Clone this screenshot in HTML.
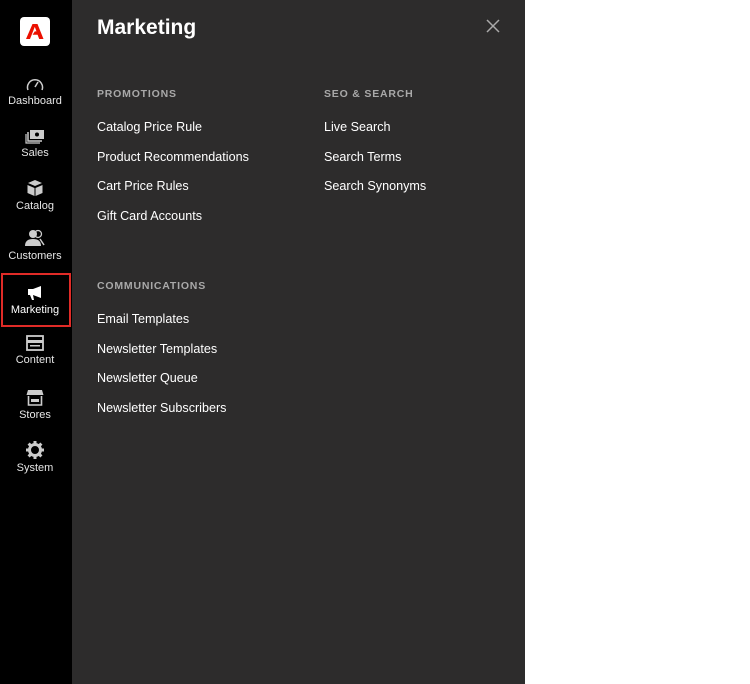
<!DOCTYPE html>
<html><head><style>
*{margin:0;padding:0;box-sizing:border-box}
body{width:750px;height:684px;background:#fff;font-family:"Liberation Sans",sans-serif;position:relative;overflow:hidden}
#side{position:absolute;left:0;top:0;width:72px;height:684px;background:#000}
#panel{position:absolute;left:72px;top:0;width:453px;height:684px;background:#2d2c2c}
.logo{position:absolute;left:20px;top:17px;width:30px;height:29px;background:#fff;border-radius:4px}
.it{position:absolute;left:0;width:70px;text-align:center;color:#e6e6e6;font-size:11px}
.it svg{display:block;margin:0 auto 3px}
.sel{position:absolute;left:1px;top:273px;width:70px;height:54px;border:2px solid #e02b27}
.t{position:absolute;color:#fff;font-size:12.6px;}
.h{position:absolute;color:#a9a9a9;font-size:10.5px;font-weight:bold;letter-spacing:0.8px}
h1{position:absolute;left:25px;top:16px;color:#fff;font-size:21px;font-weight:bold}
</style></head><body>
<div id="side">
<div class="logo"><svg width="30" height="29" viewBox="0 0 30 29"><path d="M12.5 7h5l6 15h-4.3l-1.6-4.2h-5l2.2-3.4h1.7l-1.7-4.5L10 22H6z" fill="#eb1000"/></svg></div>
<div class="it" style="top:76px"><svg width="18" height="16" viewBox="0 0 18 16"><path d="M2 14A7.5 7.5 0 1 1 16 14" fill="none" stroke="#ccc" stroke-width="1.5"/><path d="M9 11l3-5" stroke="#ccc" stroke-width="1.5"/></svg>Dashboard</div>
<div class="it" style="top:128px"><svg width="20" height="16" viewBox="0 0 20 16"><rect x="5" y="2" width="14" height="9" fill="#ccc"/><circle cx="12" cy="6.5" r="2" fill="#000"/><path d="M3 4v9h14" fill="none" stroke="#ccc" stroke-width="1.5"/><path d="M1 6v9h14" fill="none" stroke="#ccc" stroke-width="1.2"/></svg>Sales</div>
<div class="it" style="top:179px"><svg width="18" height="18" viewBox="0 0 18 18"><path d="M9 1l7 3-7 3-7-3z" fill="#ccc"/><path d="M1.5 6l7 3v8l-7-3zM16.5 6l-7 3v8l7-3z" fill="#ccc"/></svg>Catalog</div>
<div class="it" style="top:229px"><svg width="20" height="18" viewBox="0 0 20 18"><circle cx="8" cy="5" r="4" fill="#ccc"/><path d="M0 17c0-5 3-7 8-7s8 2 8 7z" fill="#ccc"/><circle cx="13" cy="5" r="3.5" fill="none" stroke="#ccc" stroke-width="1.3"/><path d="M15 10l4 6" stroke="#ccc" stroke-width="1.5"/></svg>Customers</div>
<div class="sel"></div>
<div class="it" style="top:285px;color:#fff"><svg width="16" height="16" viewBox="0 0 16 16"><path d="M1 4h5l8-3v12l-8-3H1z" fill="#fff"/><path d="M3 10l2 5h2l-1-5z" fill="#fff"/></svg>Marketing</div>
<div class="it" style="top:335px"><svg width="18" height="16" viewBox="0 0 18 16"><rect x="1" y="1" width="16" height="14" fill="none" stroke="#ccc" stroke-width="1.8"/><rect x="1" y="5" width="16" height="3" fill="#ccc"/><rect x="4" y="10" width="10" height="1.5" fill="#ccc"/></svg>Content</div>
<div class="it" style="top:389px"><svg width="18" height="17" viewBox="0 0 18 17"><path d="M2 1h14l1.5 5h-17z" fill="#ccc"/><path d="M2.5 7v9h13V7" fill="none" stroke="#ccc" stroke-width="1.6"/><rect x="5" y="10" width="8" height="3" fill="#ccc"/></svg>Stores</div>
<div class="it" style="top:441px"><svg width="18" height="18" viewBox="0 0 18 18"><circle cx="9" cy="9" r="5.5" fill="none" stroke="#ccc" stroke-width="3"/><path d="M9 0v4M9 14v4M0 9h4M14 9h4M2.6 2.6l3 3M12.4 12.4l3 3M2.6 15.4l3-3M12.4 5.6l3-3" stroke="#ccc" stroke-width="3"/></svg>System</div>
</div>
<div id="panel">
<h1>Marketing</h1>
<svg style="position:absolute;left:414px;top:19px" width="14" height="14" viewBox="0 0 14 14"><path d="M1 1l12 12M13 1L1 13" stroke="#aaa" stroke-width="1.5"/></svg>
<div class="h" style="left:25px;top:88px">PROMOTIONS</div>
<div class="t" style="left:25px;top:120px">Catalog Price Rule</div>
<div class="t" style="left:25px;top:150px">Product Recommendations</div>
<div class="t" style="left:25px;top:179px">Cart Price Rules</div>
<div class="t" style="left:25px;top:209px">Gift Card Accounts</div>
<div class="h" style="left:252px;top:88px">SEO &amp; SEARCH</div>
<div class="t" style="left:252px;top:120px">Live Search</div>
<div class="t" style="left:252px;top:150px">Search Terms</div>
<div class="t" style="left:252px;top:179px">Search Synonyms</div>
<div class="h" style="left:25px;top:280px">COMMUNICATIONS</div>
<div class="t" style="left:25px;top:312px">Email Templates</div>
<div class="t" style="left:25px;top:342px">Newsletter Templates</div>
<div class="t" style="left:25px;top:371px">Newsletter Queue</div>
<div class="t" style="left:25px;top:401px">Newsletter Subscribers</div>
</div>
</body></html>
